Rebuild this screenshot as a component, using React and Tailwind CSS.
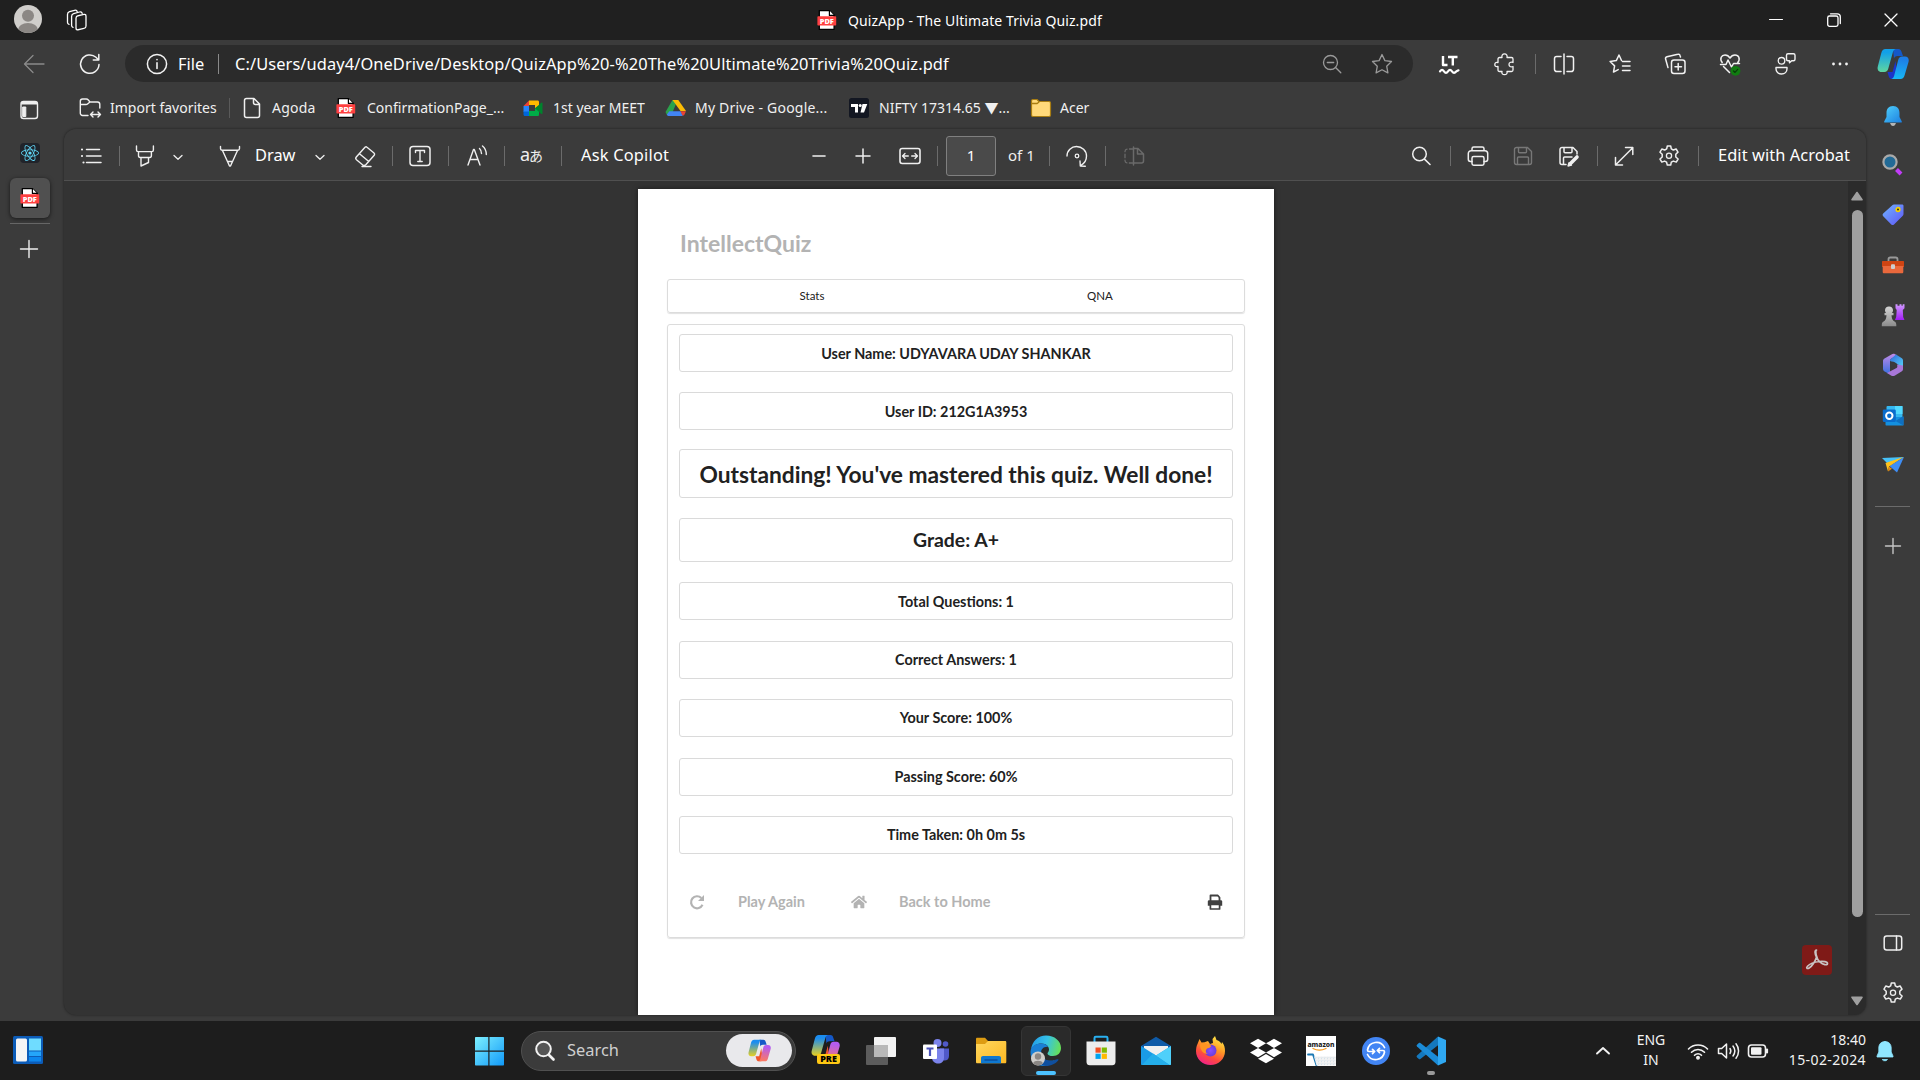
import React from "react";
import { FaDropbox, FaHome, FaReact } from "react-icons/fa";

function Icon({ size = "size-6", box = "0 0 24 24", className = "", children }) {
  return (
    <svg
      viewBox={box}
      fill="none"
      stroke="currentColor"
      strokeWidth="1.3"
      strokeLinecap="round"
      strokeLinejoin="round"
      className={`shrink-0 ${size} ${className}`}
    >
      {children}
    </svg>
  );
}

function T({ className = "", children }) {
  return <span className={`shrink-0 whitespace-nowrap ${className}`}>{children}</span>;
}

function Divider({ className = "", tone = "bg-[#6b6b6b]" }) {
  return <div className={`h-5 w-px shrink-0 ${tone} ${className}`} />;
}

function PdfIcon({ className = "" }) {
  return (
    <Icon className={className}>
      <path d="M4.3 2.6h10.2l4.6 4.6v14.2H4.3z" fill="#fff" stroke="#000" strokeWidth="1.3" />
      <path d="M14.4 2.6v4.8h4.8" fill="#fff" stroke="#000" strokeWidth="1.2" />
      <rect x="2.4" y="8.2" width="18.8" height="9.4" rx="0.8" fill="#ff4040" stroke="none" />
      <text x="11.8" y="15.6" textAnchor="middle" fontSize="7.4" fontWeight="900" fill="#fff" stroke="none" fontFamily="Noto Sans, sans-serif">PDF</text>
    </Icon>
  );
}

function GearIcon({ className = "" }) {
  return (
    <Icon className={className}>
      <path d="M10.3 2h3.4l.6 2.9 2 1.1 2.8-1 1.9 3.1-2.2 2.1v2.8l2.3 2-1.8 3.1-2.9-1-2.1 1.1-.6 2.9h-3.4l-.7-2.9-2-1.1-2.8 1L3 15l2.2-2v-2.7L3 8.2 4.8 5l2.9 1 2-1.1z" strokeWidth="1.5" />
      <circle cx="12" cy="11.7" r="2.6" />
    </Icon>
  );
}

function ChevronDown({ className = "" }) {
  return (
    <Icon size="size-3" box="0 0 12 12" className={className}>
      <path d="M2 4.5 6 8.3l4-3.8" />
    </Icon>
  );
}

function Copilot({ size = "size-8", id, stops }) {
  const [a, b, c, d, e] = stops;
  return (
    <Icon size={size} box="0 0 32 32">
      <defs>
        <linearGradient id={`${id}l`} x1="0" y1="0" x2="0" y2="1">
          <stop offset="0.15" stopColor={a} />
          <stop offset="1" stopColor={b} />
        </linearGradient>
        <linearGradient id={`${id}r`} x1="0.4" y1="0" x2="0.3" y2="1">
          <stop offset="0.1" stopColor={c} />
          <stop offset="1" stopColor={d} />
        </linearGradient>
      </defs>
      <path d="M16 1h5.4c1.7 0 2.5 1 3 2.5L26 8h-5.5c-2 0-3 1-3.5 2.5z" fill="#1458c8" stroke="none" />
      <path d="M10.5 24h5l3-11 1.5 12-1.5 6h-3.7c-1.6 0-2.5-1-3-2.5z" fill={e} stroke="none" />
      <path d="M8.5 1h10.2c-1.7.4-2.4 1.7-2.9 3.5l-4.5 16c-.6 2.2-1.6 3.5-4 3.5H4.5C1.5 24 0 21.5.8 18.5L4.3 5C5 2.4 6.3 1 8.5 1z" fill={`url(#${id}l)`} stroke="none" />
      <path d="M23.5 31H14.3c1.7-.4 2.4-1.7 2.9-3.5l4-15.5c.6-2.2 1.6-3.5 4-3.5h2.8c3 0 4.3 2.5 3.5 5.5L27.7 27c-.7 2.6-2 4-4.2 4z" fill={`url(#${id}r)`} stroke="none" />
    </Icon>
  );
}

function TitleBar() {
  return (
    <div className="flex h-10 items-center bg-[#202020] text-white">
      <Icon size="size-7" box="0 0 28 28" className="ml-3.5 mb-0.5">
        <defs>
          <clipPath id="face"><circle cx="14" cy="14" r="14" /></clipPath>
        </defs>
        <g clipPath="url(#face)" stroke="none">
          <rect width="28" height="28" fill="#d0cecb" />
          <circle cx="14" cy="10.8" r="6" fill="#8b8784" />
          <ellipse cx="14" cy="25" rx="10" ry="7" fill="#8b8784" />
        </g>
      </Icon>
      <Icon className="ml-[23px]">
        <rect x="11" y="7" width="10" height="14" rx="2" transform="skewY(-12) translate(0 3.5)" />
        <path d="M8 19.3c-1-.2-1.4-.8-1.4-1.700V8.500c0-1.500.6-2.400 2-2.800L14.500 4c1.400-.4 2.400.1 2.700 1.300" />
        <path d="M4 16.300c-1-.2-1.500-.8-1.500-1.700V6.500c0-1.500.6-2.400 2-2.800L9.500 2.300c1.400-.4 2.400.1 2.700 1.300" />
      </Icon>
      <PdfIcon className="ml-[726px]" />
      <T className="ml-[9px] w-[254px] text-[14px] tracking-[0.1px]">QuizApp - The Ultimate Trivia Quiz.pdf</T>
      <Icon size="size-3.5" box="0 0 14 14" className="ml-[667px]"><path d="M0.5 6.500h13" strokeWidth="1" /></Icon>
      <Icon size="size-3.5" box="0 0 14 14" className="ml-[44px]">
        <rect x="0.7" y="3" width="10.3" height="10.3" rx="1.8" />
        <path d="M3.500.8h6.800c1.900 0 3 1.100 3 3v6.700" />
      </Icon>
      <Icon size="size-3.5" box="0 0 14 14" className="ml-[43px]"><path d="M1 1l12 12M13 1 1 13" /></Icon>
    </div>
  );
}

function AddressRow() {
  return (
    <div className="flex h-[47px] items-center text-[#f2f2f2]">
      <Icon className="ml-[22px] text-[#8a8a8a]"><path d="M22 12H3M11 3.500 2.500 12l8.500 8.500" /></Icon>
      <Icon className="ml-8"><path d="M21 12.500A9.200 9.200 0 1 1 18 5.300l2.700 2.700M20.800 2.500V8h-5.500" strokeWidth="1.5" /></Icon>
      <div className="ml-[23px] flex h-[37px] w-[1288px] shrink-0 items-center rounded-full bg-[#2b2b2b] pr-[19px]">
        <Icon className="ml-5">
          <circle cx="12" cy="12" r="9.6" strokeWidth="1.5" />
          <path d="M12 10.800v5.700M12 7.500v.2" strokeWidth="1.6" />
        </Icon>
        <T className="ml-[9px] w-[26px] pt-px text-[16.4px] text-white">File</T>
        <Divider className="ml-3.5" tone="bg-[#8a8a8a]" />
        <T className="ml-4 w-[714px] pt-px text-[16.4px] tracking-[0.1px] text-white">C:/Users/uday4/OneDrive/Desktop/QuizApp%20-%20The%20Ultimate%20Trivia%20Quiz.pdf</T>
        <Icon className="ml-auto text-[#9a9a9a]"><circle cx="10.5" cy="10.5" r="7" /><path d="m15.800 15.800 5 5M7.300 10.500h6.400" /></Icon>
        <Icon className="ml-[26px] text-[#9a9a9a]"><path d="m12 2.500 2.900 6.100 6.600.9-4.800 4.700 1.200 6.700L12 17.700l-5.900 3.200 1.200-6.700L2.500 9.500l6.600-.9z" /></Icon>
      </div>
      <Icon className="ml-6 text-white">
        <path d="M6 4v9h4.500M11 5h9.500M15.800 5v8.500" strokeWidth="2.4" strokeLinecap="butt" />
        <path d="M3 19.300c1.500-2 2.600-2 4 0s2.600 2 4 0 2.600-2 4 0 2.600 2 4.500 0l2-1" strokeWidth="2.2" />
      </Icon>
      <Icon className="ml-8"><path d="M6.500 5.500H9c-.6-2.400.7-3.600 2.500-3.600S14.600 3.100 14 5.500h4.500c1 0 1.500.5 1.500 1.500v3.500c-2.600-.8-4 .2-4 2s1.400 2.800 4 2V18c0 1-.5 1.500-1.500 1.500H14c.6 2.200-.7 3.200-2.500 3.200S8.400 21.700 9 19.500H6.500c-1 0-1.500-.5-1.500-1.500v-3.500c-2.200.6-3.200-.4-3.200-2s1-2.600 3.200-2V7c0-1 .5-1.500 1.500-1.500z" /></Icon>
      <Divider className="ml-[18px]" />
      <Icon className="ml-4"><path d="M12 2v20M9 4.500H4.700A2.200 2.200 0 0 0 2.500 6.700v10.600a2.200 2.200 0 0 0 2.200 2.200H9M15 4.500h4.300a2.200 2.200 0 0 1 2.200 2.200v10.600a2.200 2.200 0 0 1-2.200 2.200H15" strokeWidth="1.5" /></Icon>
      <Icon className="ml-8"><path d="M13.500 8.500 11 3 8.300 8.600l-6.200.9 4.500 4.400-1.100 6.200 4.700-2.500M14.500 9.500H22M14.500 14H22M14.500 18.500H22" strokeWidth="1.5" /></Icon>
      <Icon className="ml-[31px]">
        <rect x="8.5" y="8" width="13.5" height="13.5" rx="2.5" strokeWidth="1.5" />
        <path d="M15.200 11.500v6.500M12 14.800h6.500M17.500 5l-.4-1.300c-.3-1.100-1.200-1.700-2.300-1.400L4 4.700c-1.100.3-1.700 1.200-1.400 2.300L5 15.600" strokeWidth="1.5" />
      </Icon>
      <Icon className="ml-[31px]">
        <path d="M4.200 10.500C1.300 6.500 3.500 3 7 3c2.300 0 3.900 1.200 5 3 1.100-1.800 2.700-3 5-3 3.600 0 5.700 3.500 2.800 7.500M5.500 14.500l6 6M2.500 12.500H8l2-4.500 3.500 7 2-3.500h6" strokeWidth="1.5" />
        <circle cx="17.500" cy="18.800" r="4.9" fill="#107c10" stroke="none" />
        <path d="m15.500 19 1.500 1.400 2.700-3" stroke="#0a3d0a" />
      </Icon>
      <Icon className="ml-[31px]">
        <circle cx="8.5" cy="8.8" r="3.3" />
        <path d="M3 15.500h11v1.300c0 3-2.200 5.200-5.500 5.200S3 19.800 3 16.800zM15 1.800h5.500c1 0 1.500.6 1.500 1.500v4c0 1-.5 1.500-1.500 1.500h-1.800l-2.200 2V8.800H15c-1 0-1.500-.5-1.500-1.500v-4c0-.9.5-1.500 1.500-1.500z" strokeWidth="1.4" />
      </Icon>
      <Icon className="ml-[31px]"><path d="M5.500 12h.01M12 12h.01M18.500 12h.01" strokeWidth="2.8" /></Icon>
      <div className="ml-[25px]">
        <Copilot id="cpa" stops={["#12a0e8", "#5fd6a0", "#1d7fe8", "#18b9f5", "#1b35c9"]} />
      </div>
    </div>
  );
}

function Favorites() {
  return (
    <div className="flex h-[42px] items-center text-[14px] text-[#f0f0f0]">
      <Icon className="ml-3.5"><path d="M10 19.500H4.500a2.200 2.200 0 0 1-2.200-2.200V5.200C2.300 4 3.300 3 4.500 3h3.800c.8 0 1.500.4 2 1l1.700 2h7.500c1.300 0 2.300 1 2.300 2.200V12M2.500 8.500H8c.7 0 1.300-.3 1.800-.8L12 6M12.500 18.500h10M15 16l-2.500 2.500L15 21M20 16l2.500 2.500L20 21" strokeWidth="1.4" /></Icon>
      <T className="ml-2 w-[107px] pb-0.5">Import favorites</T>
      <Divider className="ml-3" tone="bg-[#5a5a5a]" />
      <Icon className="ml-2.5"><path d="M6.500 2.500H14l5.500 5.500v11.500a2 2 0 0 1-2 2h-11a2 2 0 0 1-2-2v-15a2 2 0 0 1 2-2zM13.500 3v3.500c0 1.100.9 2 2 2h3.700" strokeWidth="1.5" /></Icon>
      <T className="ml-2 w-[46px] pb-0.5 tracking-[0.2px]">Agoda</T>
      <PdfIcon className="ml-4" />
      <T className="ml-[9px] w-[137px] pb-0.5">ConfirmationPage_...</T>
      <Icon className="ml-[17px]">
        <g stroke="none">
          <path d="M8 4.500h8.500c1 0 1.500.6 1.500 1.500v4l-4 2.500v-3.500H8z" fill="#ffba00" />
          <path d="M2.500 10 8 4.500V10z" fill="#ea4335" />
          <path d="M2.500 10H8v6H2.500z" fill="#2684fc" />
          <path d="M2.500 15.500H8V20H4c-1 0-1.500-.6-1.500-1.500z" fill="#0066da" />
          <path d="M8 15h6v-3l4-1v7.500c0 1-.5 1.500-1.500 1.500H8z" fill="#00ac47" />
          <path d="m14 12.200 6.300-5.500c.5-.4 1.200-.1 1.200.6v10c0 .7-.7 1-1.200.6z" fill="#00832d" />
        </g>
      </Icon>
      <T className="ml-2 w-[93px] pb-0.5">1st year MEET</T>
      <Icon className="ml-[18px]">
        <g stroke="none">
          <path d="M8.500 4h5L7 20l-4-1-1.500-3z" fill="#2ba24c" />
          <path d="M8.500 4h5.800L22 15h-5.500z" fill="#fbbc04" />
          <path d="M22 15.300H16l2.500 4.400c1 0 1.500-.4 2-1.200z" fill="#ea4335" />
          <path d="M5.300 15.300h11L18.700 20H5c-1 0-1.600-.4-2.200-1.300z" fill="#4285f4" />
        </g>
      </Icon>
      <T className="ml-[7px] w-[134px] pb-0.5 tracking-[0.2px]">My Drive - Google...</T>
      <Icon className="ml-[18px]">
        <rect x="2" y="2" width="20" height="20" rx="2.5" fill="#131722" stroke="none" />
        <path d="M4 8h7v8.500H8V11H4zM15.500 8h4.800L17 16.500h-3.500z" fill="#fff" stroke="none" />
        <circle cx="13.2" cy="9.4" r="1.5" fill="#fff" stroke="none" />
      </Icon>
      <T className="ml-2 w-[132px] pb-0.5">NIFTY 17314.65 ▼...</T>
      <Icon className="ml-[18px]">
        <path d="M2.500 5c0-1 .5-1.500 1.500-1.500h4L10 5.500h10c1 0 1.500.5 1.500 1.500v12c0 1-.5 1.500-1.500 1.500H4c-1 0-1.500-.5-1.500-1.500z" fill="#ffd97a" stroke="#a87d12" strokeWidth="1.2" />
        <path d="M3.200 7.500h5L10 6" stroke="#a87d12" />
      </Icon>
      <T className="ml-[7px] w-[30px] pb-0.5">Acer</T>
    </div>
  );
}

function PdfToolbar() {
  return (
    <div className="flex h-[52px] shrink-0 items-center border-b border-[#505050] bg-[#3b3b3b] pt-0.5 text-[16.4px] text-[#efefef]">
      <Icon className="ml-[15px]"><path d="M7.500 5.500h13M7.500 12H22M7.500 18.500H22" strokeWidth="1.5" /><path d="M3 5.500h.01M3 12h.01M4.500 18.500h.01" strokeWidth="2.2" /></Icon>
      <Divider className="ml-4" />
      <Icon className="ml-[13px]"><path d="M3.500 2v4c0 1 .6 1.600 1.600 1.600h13.700c1 0 1.600-.6 1.600-1.600V2M5.500 7.600v4c0 1 .7 1.900 1.700 1.900h9.500c1 0 1.700-.9 1.700-1.900v-4M8 13.500V22l7.500-3.500v-5" strokeWidth="1.4" /></Icon>
      <ChevronDown className="ml-[15px] mt-0.5" />
      <Icon className="ml-[34px]"><path d="M2.500 2.500v2c0 1 .6 1.700 1.600 1.700h15.800c1 0 1.600-.7 1.600-1.700v-2M4.500 6.500l7 15.500h1l7-15.500M9.800 17.500h4.500" strokeWidth="1.4" /></Icon>
      <T className="ml-[13px] w-10 text-white">Draw</T>
      <ChevronDown className="ml-[19px] mt-0.5" />
      <Icon className="ml-[27px]"><path d="M14 3.200 21 9c.8.7.8 1.500.2 2.300L13 20.500c-1 1-2.300 1.200-3.500.2l-6-5c-1-.9-1-1.800-.2-2.700L12 3.300c.6-.6 1.400-.7 2-.1zM6.500 9.800l9 7.500M9 22.500h9" strokeWidth="1.4" /></Icon>
      <Divider className="ml-[15px]" />
      <Icon className="ml-[15px]"><rect x="2" y="2.5" width="20" height="19" rx="3" strokeWidth="1.5" /><path d="M7.500 8.500V6.500h9v2M12 6.500v11M9.800 17.500h4.400" strokeWidth="1.4" /></Icon>
      <Divider className="ml-4" />
      <Icon className="ml-4"><path d="m3 21 5.500-15.500h.8L15 21M5 15.500h8M14.500 4.500c1.400 1.300 2 3 2 5M17.500 2c2.500 2 3.800 4.800 3.800 8.500" strokeWidth="1.4" /></Icon>
      <Divider className="ml-[15px]" />
      <span className="ml-[15px] w-6 shrink-0 whitespace-nowrap pb-0.5 text-[18px] tracking-[-1px]">a<span className="text-[14px]">あ</span></span>
      <Divider className="ml-[17px]" />
      <T className="ml-[19px] w-[90px] tracking-[0.2px] text-white">Ask Copilot</T>
      <Icon className="ml-[136px]"><path d="M6 12h12" strokeWidth="1.6" /></Icon>
      <Icon className="ml-5"><path d="M5 12h14M12 5v14" strokeWidth="1.5" /></Icon>
      <Icon className="ml-[23px]"><rect x="2" y="4.5" width="20" height="15" rx="2.2" strokeWidth="1.6" /><path d="M4.800 12h5.500M7 9.500 4.500 12 7 14.500M19.200 12h-5.500M17 9.500l2.500 2.500-2.500 2.500" /></Icon>
      <Divider className="ml-[15px]" />
      <div className="ml-2 flex h-10 w-[50px] shrink-0 items-center justify-center rounded-[3px] border border-[#808080] bg-[#4a4a4a] text-[15px] text-white">1</div>
      <T className="ml-3 w-[26px] text-[15px]">of 1</T>
      <Divider className="ml-[15px]" />
      <Icon className="ml-[15px]"><path d="M2 12C2 6.500 6.500 2.500 11.500 2.500c5.500 0 10 4.300 10 9.500 0 4-2 7.300-5.500 9.300M15 17l.3 5 5 .2" strokeWidth="1.4" /><circle cx="12" cy="12" r="1.8" /></Icon>
      <Divider className="ml-4" />
      <Icon className="ml-4 text-[#6a6a6a]"><path d="M11 5H5.500A2.500 2.500 0 0 0 3 7.500v9A2.500 2.500 0 0 0 5.500 19H11" strokeDasharray="3.5 2.5" /><path d="M11.500 3v18M11.500 4.500H16l5.500 5.500v7a2 2 0 0 1-2 2h-8M15.500 5v5h6" strokeWidth="1.5" /></Icon>
      <Icon className="ml-[263px]"><circle cx="10.5" cy="10" r="6.8" strokeWidth="1.5" /><path d="m15.500 15.200 5.500 5.300" strokeWidth="1.6" /></Icon>
      <Divider className="ml-[17px]" />
      <Icon className="ml-[15px]"><path d="M6 6.500V4.700C6 3.800 6.800 3 7.700 3h8.600c.9 0 1.700.8 1.700 1.700v1.800M6 17.500H4.500A2.200 2.200 0 0 1 2.300 15.300V9.500c0-1.600 1.200-2.800 2.800-2.800h13.800c1.600 0 2.800 1.200 2.800 2.800v5.800a2.200 2.200 0 0 1-2.200 2.200H18" strokeWidth="1.5" /><rect x="6" y="12.5" width="12" height="8.8" rx="1.7" strokeWidth="1.5" /></Icon>
      <Icon className="ml-[21px] text-[#777]"><path d="M5.500 3.500h11l4 4v11a2 2 0 0 1-2 2h-13a2 2 0 0 1-2-2v-13a2 2 0 0 1 2-2zM7.500 3.500v4.300c0 .6.4 1 1 1h6c.6 0 1-.4 1-1V3.500M6.500 20.500V14c0-.7.4-1 1-1h9c.6 0 1 .3 1 1v6.500" strokeWidth="1.4" /></Icon>
      <Icon className="ml-[22px]"><path d="M9 20.500H5a2 2 0 0 1-2-2v-13a2 2 0 0 1 2-2h11l4 4V10M7 3.500v4.300c0 .6.4 1 1 1h6c.6 0 1-.4 1-1V3.500M6.500 20.500V14c0-.7.4-1 1-1H15" strokeWidth="1.5" /><path d="m13.500 19.500 6.500-6.500" strokeWidth="3.6" /><path d="m11 22 3.500-.8-2.500-2.500z" fill="currentColor" /></Icon>
      <Divider className="ml-4" />
      <Icon className="ml-3.5"><path d="M4 20.500 20.500 4M13.500 3.500h7.300v7M3.500 13.500V21h7" strokeWidth="1.5" /></Icon>
      <GearIcon className="ml-[21px]" />
      <Divider className="ml-[17px]" />
      <T className="ml-[19px] w-[133px] tracking-[0.07px] text-white">Edit with Acrobat</T>
    </div>
  );
}

const ROWS = [
  ["mt-[9px] h-[38px] pt-px text-[14.4px]", "User Name: UDYAVARA UDAY SHANKAR"],
  ["mt-5 h-[38px] pt-px text-[14.4px]", "User ID: 212G1A3953"],
  ["mt-[19px] h-[49px] pt-[3px] text-[22.75px]", "Outstanding! You've mastered this quiz. Well done!"],
  ["mt-5 h-[44px] text-[19.4px]", "Grade: A+"],
  ["mt-5 h-[38px] pt-px text-[14.4px]", "Total Questions: 1"],
  ["mt-[21px] h-[38px] text-[14.4px]", "Correct Answers: 1"],
  ["mt-5 h-[38px] text-[14.4px]", "Your Score: 100%"],
  ["mt-[21px] h-[38px] text-[14.4px]", "Passing Score: 60%"],
  ["mt-5 h-[38px] text-[14.4px]", "Time Taken: 0h 0m 5s"],
];

function Page() {
  return (
    <div className="ml-[574px] mt-2 flex h-[826px] w-[636px] shrink-0 flex-col bg-white px-[29px] text-[#212121] shadow-[0_0_5px_rgba(0,0,0,0.5)] [font-family:Lato,sans-serif]">
      <div className="mt-[38px] flex h-8 items-center pl-[13px] text-[23px] font-bold text-[#b3b3b3]"><T>IntellectQuiz</T></div>
      <div className="mt-5 flex h-[34px] shrink-0 items-center rounded-[3px] border border-[#dcdcdc] text-[11.5px] shadow-[0_1px_1px_#e2e2e2]">
        <div className="flex-1 text-center"><T>Stats</T></div>
        <div className="flex-1 text-center"><T>QNA</T></div>
      </div>
      <div className="mt-[11px] flex h-[614px] shrink-0 flex-col rounded-[3px] border border-[#dcdcdc] px-[11px] shadow-[0_1px_1px_#e2e2e2]">
        {ROWS.map(([cls, text]) => (
          <div key={text} className={`flex shrink-0 items-center justify-center rounded-[3px] border border-[#dadada] font-bold ${cls}`}><T>{text}</T></div>
        ))}
        <div className="mt-9 flex h-6 items-center text-[14.5px] font-bold text-[#b3b3b3]">
          <Icon size="size-4" box="0 0 16 16" className="mb-px ml-2.5"><path d="M13.500 10.800A6 6 0 1 1 12.300 4" strokeWidth="2.2" strokeLinecap="butt" /><path d="M15 1v6H9z" fill="currentColor" stroke="none" /></Icon>
          <T className="ml-[33px] w-[68px]">Play Again</T>
          <FaHome className="mb-px ml-[45px] size-4" />
          <T className="ml-8 w-[90px]">Back to Home</T>
          <Icon size="size-4" box="0 0 16 16" className="mb-px ml-auto mr-[10px] text-[#404040]">
            <path d="M3.500 7V1.500h7.300L12.500 3.500V7" strokeWidth="1.8" />
            <path d="M.8 7.500C.8 6.700 1.500 6.200 2.300 6.200h11.400c.8 0 1.500.5 1.500 1.300v4.300H.8z" fill="currentColor" stroke="none" />
            <rect x="3.4" y="10.3" width="9.2" height="4.7" fill="#fff" strokeWidth="1.7" />
          </Icon>
        </div>
      </div>
    </div>
  );
}

function Viewer() {
  return (
    <div className="flex h-[886px] flex-col overflow-hidden rounded-xl bg-[#333] shadow-[0_0_3px_rgba(0,0,0,0.45)]">
      <PdfToolbar />
      <div className="flex min-h-0 flex-1">
        <Page />
        <div className="ml-auto mr-4 flex flex-col justify-end pb-10">
          <div className="flex size-[30px] items-center justify-center rounded-[4px] bg-[#7f1a17]">
            <Icon className="text-[#c9c4c4]">
              <path d="M11.500 2c-2 0-1.800 3.500 0 7.200-1.500 4.300-4 8.500-7 10.500-2.500 1.700-3.600.3-2-1.500 2.500-2.700 7.500-4.200 12-4.700 4-.4 8 .2 8 2.200s-4.500 1-7.500-1.500c-4-3.300-5-12.200-3.500-12.200z" strokeWidth="1.7" />
            </Icon>
          </div>
        </div>
        <div className="flex w-[18px] flex-col items-center bg-[#2b2b2b] pt-2.5 text-[#9f9f9f]">
          <Icon size="h-2.5 w-3" box="0 0 12 10"><path d="M6 1.500 11 8.800H1z" fill="currentColor" strokeWidth="1.6" /></Icon>
          <div className="mt-[9px] h-[707px] w-[11px] rounded-full bg-[#9f9f9f]" />
          <Icon size="h-2.5 w-3" box="0 0 12 10" className="mb-[9px] mt-auto"><path d="M6 8.500 1 1.200h10z" fill="currentColor" strokeWidth="1.6" /></Icon>
        </div>
      </div>
    </div>
  );
}

function LeftRail() {
  return (
    <div className="flex w-16 shrink-0 flex-col items-start pl-[17px] text-[#eee]">
      <Icon className="mt-[11px]"><rect x="4" y="3.5" width="16.5" height="17" rx="2.5" strokeWidth="1.4" /><path d="M4 6.500V6c0-1.500 1-2.500 2.500-2.500h11.600c1.400 0 2.400 1 2.400 2.500v.5z" fill="currentColor" stroke="none" /><path d="M6 9h2.800v9.500H6z" fill="currentColor" strokeWidth="1" /></Icon>
      <div className="ml-[3px] mt-[21px] flex size-5 items-center justify-center rounded-sm bg-[#20232a]"><FaReact className="size-[18px] text-[#61dafb]" /></div>
      <div className="-ml-[7px] mt-[15px] flex size-10 items-center justify-center rounded-md bg-[#505050] shadow-[0_1px_4px_rgba(0,0,0,0.6)]"><PdfIcon /></div>
      <div className="-ml-[7px] mt-[5px] h-px w-10 bg-[#666]" />
      <Icon className="mt-[13px]"><path d="M3.500 12h17M12 3.500v17" strokeWidth="1.4" /></Icon>
    </div>
  );
}

function RightRail() {
  return (
    <div className="flex w-[54px] shrink-0 flex-col items-center pb-4 pr-px text-[#eee]">
      <svg className="size-0">
        <defs>
          <linearGradient id="bell" x1="0" y1="0" x2="1" y2="1"><stop stopColor="#4fd0fb" /><stop offset="1" stopColor="#1c7fe0" /></linearGradient>
          <linearGradient id="tag" x1="0" y1="0" x2="1" y2="1"><stop stopColor="#6fb4ff" /><stop offset="1" stopColor="#6055f5" /></linearGradient>
          <linearGradient id="rook" x1="0" y1="0" x2="0" y2="1"><stop stopColor="#d09aff" /><stop offset="1" stopColor="#a11df5" /></linearGradient>
          <linearGradient id="pawn" x1="0" y1="0" x2="0" y2="1"><stop stopColor="#d5d5d5" /><stop offset="1" stopColor="#8b8b8b" /></linearGradient>
          <linearGradient id="m1" x1="0" y1="0" x2="0" y2="1"><stop stopColor="#c08be8" /><stop offset="1" stopColor="#3b6fe0" /></linearGradient>
          <linearGradient id="m2" x1="0" y1="0" x2="1" y2="1"><stop stopColor="#2c66d8" /><stop offset="1" stopColor="#57d5f8" /></linearGradient>
        </defs>
      </svg>
      <Icon className="mt-[17px]"><g stroke="none"><path d="M9 19h6l-1 2c-1 1.200-3 1.200-4 0z" fill="#b5b5b5" /><path d="M12 2C7.500 2 5.500 5 5.500 9v4L3.200 17.500c-.2.6 0 1 .6 1h16.400c.6 0 .8-.4.6-1L18.500 13V9c0-4-2-7-6.500-7z" fill="url(#bell)" /></g></Icon>
      <Icon className="mt-[25px]"><path d="m15.500 16.500 4.500 4.500" stroke="#c13cf7" strokeWidth="4" strokeLinecap="butt" /><circle cx="9" cy="9" r="6.6" fill="#226a96" stroke="#a9a9a9" strokeWidth="2.2" /></Icon>
      <Icon className="mt-[26px]"><path d="M13 1.500h8c1 0 1.500.5 1.500 1.500v8c0 .7-.3 1.200-.7 1.700L13 21.400c-.9.8-1.900.8-2.700 0L2.200 13.200c-.8-.9-.8-1.900 0-2.700L11.300 2.200c.5-.5 1-.7 1.700-.7z" fill="url(#tag)" stroke="none" /><circle cx="17" cy="6.5" r="1.8" stroke="#f5d000" strokeWidth="1.7" fill="#222" /></Icon>
      <Icon className="mt-[27px]"><path d="M7.500 7V5.300c0-1 .7-1.800 1.800-1.800h5.400c1.100 0 1.800.8 1.800 1.800V7" stroke="#999" strokeWidth="1.8" /><path d="M1 8c0-.7.4-1 1-1h20c.6 0 1 .3 1 1v5H1z" fill="#cf4413" stroke="none" /><path d="M1.700 12h20.600v6c0 .8-.5 1.300-1.300 1.300H3c-.8 0-1.300-.5-1.300-1.300z" fill="#e9683c" stroke="none" /><rect x="10" y="10.3" width="4" height="4.7" rx="1" fill="#cfcfcf" stroke="none" /></Icon>
      <Icon className="mt-[25px]"><path d="M14.500 1.300h2v1.500h2V1.300h2v1.500h1.200V1.300H23.500v4L21.800 7l.4 7 1.300 3H14l1.200-3 .5-7-1.200-1.700z" fill="url(#rook)" stroke="none" /><path d="M8 3.500c2.500 0 4 1.700 4 3.800 0 1.200-.4 2-1.200 2.700h1.700v2.300h-2c.2 3 .8 5 3 6.300 1.200.7 1.800 1.700 1.800 3.400v1.300H.8V22c0-1.700.6-2.700 1.800-3.400 2.200-1.300 2.700-3.300 2.900-6.300H3.500V10h1.700C4.400 9.300 4 8.500 4 7.300 4 5.200 5.500 3.500 8 3.500z" fill="url(#pawn)" stroke="none" /></Icon>
      <Icon className="mt-[26px]"><g stroke="none"><path d="M10.500 1.500 3.500 5.500C2.400 6.200 2 7 2 8v8c0 1 .4 1.700 1.200 2.200l4 2.200c1 .6 1.800 0 1.800-1V8c0-1 .4-1.700 1.200-2.200l6-3.500-2.200-1.100c-1-.5-2.300-.5-3.500.3z" fill="url(#m1)" /><path d="M15 1.500 20.500 5c1.100.7 1.500 1.500 1.500 2.500v6.300c0 .6-.5.8-1 .4L14 9.600 9 8c0-1 .4-1.700 1.200-2.200z" fill="url(#m2)" /><path d="M22 12.500V16c0 1-.4 1.900-1.500 2.500l-6.500 4c-1.300.8-2.700.8-4 0L6 20l9.500-5c1-.6 1-1.500.5-3.500z" fill="#a877d8" /><path d="m12 8.500 3.300 2v3.500L12 16l-2.700-2v-3.700z" fill="#3b3b3b" /></g></Icon>
      <Icon className="mt-[27px]"><g stroke="none"><rect x="5.5" y="2" width="16" height="14" rx="1" fill="#35b8f1" /><path d="M14 2h7.500v8H14z" fill="#50d9ff" /><path d="M4.500 13h18v7.500c0 .7-.3 1-1 1h-16c-.7 0-1-.3-1-1z" fill="#1490df" /><path d="m22.500 12-8 5 8 4.500z" fill="#0f6fc0" /><rect x="1.8" y="5.5" width="13" height="12.5" rx="1.3" fill="#0a6ccc" /></g><circle cx="8.3" cy="11.7" r="3.2" stroke="#fff" strokeWidth="2" /></Icon>
      <Icon className="mt-[25px]"><g stroke="none"><path d="M1 5 23 4 8.500 12.500z" fill="#47c2f8" /><path d="M23 4 16 19.500 8.500 13z" fill="#3f8ef5" /><path d="m4.500 10 18-6L8 13.500 7 18.500z" fill="#ffc21c" /><path d="m7 18.500 1-5 3 2.300z" fill="#e88b10" /></g></Icon>
      <div className="mt-[29px] h-px w-[35px] bg-[#6b6b6b]" />
      <Icon className="mt-[27px] text-[#c5c5c5]"><path d="M4.500 12h15M12 4.500v15" strokeWidth="1.4" /></Icon>
      <div className="mb-[16px] mt-auto h-px w-[35px] bg-[#6b6b6b]" />
      <Icon><rect x="3.2" y="5" width="17.5" height="14" rx="2.5" strokeWidth="1.5" /><path d="M15.500 5v14" strokeWidth="1.5" /></Icon>
      <GearIcon className="mt-[26px]" />
    </div>
  );
}

function Cell({ children }) {
  return <div className="flex w-[55px] shrink-0 items-center justify-center">{children}</div>;
}

const RAINBOW = ["#1b8df0", "#e8d020", "#b45cf0", "#ff7a5c", "#f0562c"];

function Taskbar() {
  return (
    <div className="flex h-[59px] items-center bg-[#1d1d1d] text-[#f2f2f2]">
      <Icon size="size-[30px]" box="0 0 30 30" className="ml-[13px] mb-0.5"><g stroke="none"><rect y="1" width="30" height="28" rx="1.5" fill="#0c5cb8" /><rect x="3" y="3.5" width="11" height="23" rx="1.5" fill="#f5f5f5" /><path d="M16 3.500h12v12H16z" fill="#6fdcff" /><path d="M16 16.500h12v4.500H16z" fill="#24a5fa" /><path d="M16 22h12v4.500H16z" fill="#0c86ee" /></g></Icon>
      <Icon size="size-[30px]" box="0 0 30 30" className="ml-[431px]">
        <defs><linearGradient id="win" x1="0" y1="0" x2="1" y2="1"><stop stopColor="#7df0ff" /><stop offset="1" stopColor="#1199f8" /></linearGradient></defs>
        <path d="M1 2c0-.6.4-1 1-1h12.300v13.500H1zM15.500 1H29c.6 0 1 .4 1 1v12.500H15.500zM1 15.800h13.300v13.700H2c-.6 0-1-.4-1-1zM15.500 15.800H30v12.700c0 .6-.4 1-1 1H15.500z" fill="url(#win)" stroke="none" />
      </Icon>
      <div className="ml-[17px] flex h-10 w-[275px] shrink-0 items-center rounded-full border border-[#505050] bg-[#3b3b3b] pr-[3px]">
        <Icon className="ml-[11px]"><circle cx="10.5" cy="10" r="7.3" strokeWidth="2" fill="#555" /><path d="m16 16 4.500 4.500" strokeWidth="2.6" /></Icon>
        <T className="ml-2.5 w-[51px] text-[16.4px] text-[#cfcfcf]">Search</T>
        <div className="ml-auto flex h-[33px] w-[66px] items-center justify-center rounded-full bg-[#e9e9ec]"><Copilot size="h-[23px] w-[25px]" id="cpb" stops={RAINBOW} /></div>
      </div>
      <div className="ml-[2px] flex h-full">
        <Cell>
          <div className="relative mb-1">
            <Copilot size="size-[29px]" id="cpc" stops={RAINBOW} />
            <div className="absolute -bottom-px left-1.5 h-[10px] w-[23px] rounded-[2px] bg-[#ffc814] text-center text-[9px] font-black leading-[10px] text-black">PRE</div>
          </div>
        </Cell>
        <Cell>
          <Icon size="size-[30px]" box="0 0 30 30"><g stroke="none"><rect x="8" y="1" width="22" height="20" rx="1" fill="#f3f3f3" /><rect y="9" width="22" height="20" rx="1" fill="#5c5c5c" /><path d="M8 9h14v12H8z" fill="#b9b9b9" /></g></Icon>
        </Cell>
        <Cell>
          <Icon size="size-7" box="0 0 28 28"><g stroke="none"><circle cx="15.5" cy="6" r="4" fill="#7b83eb" /><circle cx="23.5" cy="7" r="2.8" fill="#5059c9" /><path d="M18 11.500h9v7.500c0 3-2 4.500-4.500 4.500s-4.500-1.500-4.500-4z" fill="#5059c9" /><path d="M10 11.500h12v9c0 4-2.500 6-6 6s-6-2.500-6-6z" fill="#7b83eb" /><rect x="1" y="7.5" width="14" height="14.5" rx="1" fill="#fff" /></g><path d="M4.500 11.500h7M8 11.500V19" stroke="#4b53bc" strokeWidth="2.2" strokeLinecap="butt" /></Icon>
        </Cell>
        <Cell>
          <Icon size="size-8" box="0 0 32 32"><defs><linearGradient id="fold" x1="0" y1="0" x2="1" y2="1"><stop stopColor="#ffd75e" /><stop offset="1" stopColor="#fcb823" /></linearGradient></defs><g stroke="none"><path d="M1 4c0-.8.5-1.300 1.300-1.300H10l3 3.300h5v5H1z" fill="#dd9c12" /><path d="M1 9h9l3-3h17c.8 0 1.300.5 1.300 1.300V27c0 .8-.5 1.300-1.300 1.300H2.300C1.500 28.300 1 27.800 1 27z" fill="url(#fold)" /><path d="M6 28.300V23c0-1.300.8-2 2-2h16c1.200 0 2 .7 2 2v5.300z" fill="#0f78d0" /></g><path d="M10 25h12" stroke="#0b4f9e" strokeWidth="1.5" /></Icon>
        </Cell>
        <div className="relative flex w-[55px] shrink-0 items-center justify-center">
          <div className="flex size-[50px] items-center justify-center rounded-md border border-[#353535] bg-[#2a2a2a]">
            <Icon size="size-[31px]" box="0 0 31 31">
              <defs>
                <linearGradient id="eg1" x1="0" y1="0.3" x2="1" y2="0.5"><stop stopColor="#229be6" /><stop offset="0.5" stopColor="#35c1e8" /><stop offset="1" stopColor="#66e05a" /></linearGradient>
              </defs>
              <g stroke="none">
                <path d="M1 15C2 6 8 .5 16 .5c8.500 0 15 5.500 15 12.500 0 5-3.500 8-8 8-3.500 0-5.500-1.200-5.500-2.600 0-1 1.500-1.600 1.500-3.900 0-3.200-3-6-7.500-6C6.500 8.500 2.500 11 1 15z" fill="url(#eg1)" />
                <path d="M.5 16.500C1 11 5.500 8.500 11.500 8.500c3 0 5.500 1.500 6.700 3.300-5-.5-7.200 2.700-7.200 6 0 6.500 7 9.700 14 7.200-3 4-7 6-11 6C6 31 0 25 .5 16.500z" fill="#1a7fd4" />
                <path d="M11.500 16c-1.500 7 5 11.500 13 9.200 1.700-.6 3.300-1.400 4-.6.5.7-4 6.400-12.500 6.400-7 0-9-9.500-4.500-15z" fill="#0f4f9e" />
                <circle cx="8" cy="23.5" r="7" fill="#cfcdca" />
                <circle cx="8" cy="21.5" r="3.2" fill="#8b8784" />
                <path d="M3 28.300c1-3.300 9-3.300 10 0-2.500 2.800-7.500 2.800-10 0z" fill="#8b8784" />
              </g>
            </Icon>
          </div>
          <div className="absolute bottom-[5px] h-1 w-5 rounded-full bg-[#4cc2ff]" />
        </div>
        <Cell>
          <Icon size="size-8" box="0 0 32 32"><path d="M9.500 7V3c0-.8.5-1.300 1.300-1.300h10.400c.8 0 1.300.5 1.300 1.300v4" stroke="#29b0f0" strokeWidth="2" /><path d="M1.500 6.500h29V27c0 2-1.300 3.300-3.300 3.300H4.800c-2 0-3.300-1.300-3.300-3.300z" fill="#ededed" stroke="none" /><g stroke="none"><path d="M10.500 12.500h5.200v5.200h-5.200z" fill="#f25022" /><path d="M16.700 12.500h5.200v5.200h-5.200z" fill="#7fba00" /><path d="M10.500 18.700h5.200v5.200h-5.200z" fill="#00a4ef" /><path d="M16.700 18.700h5.200v5.200h-5.200z" fill="#ffb900" /></g></Icon>
        </Cell>
        <Cell>
          <Icon size="size-8" box="0 0 32 32"><g stroke="none"><path d="M1 11 16 1.800 31 11v3H1z" fill="#0f5ba8" /><path d="M4 11h24v10H4z" fill="#f0f0f0" /><path d="M1 11l15 9.500L31 11v18c0 .6-.4 1-1 1H2c-.6 0-1-.4-1-1z" fill="#1a9be6" /><path d="M31 11v18c0 .6-.4 1-1 1h-.5L13 18.700l3 1.800z" fill="#4fd0fa" /><path d="m13 18.500 16.500 11.500H2z" fill="#24aeea" /></g></Icon>
        </Cell>
        <Cell>
          <Icon size="size-[31px]" box="0 0 31 31">
            <defs>
              <linearGradient id="ffx" x1="0.8" y1="0" x2="0.3" y2="1"><stop stopColor="#fff14a" /><stop offset="0.4" stopColor="#ff9a25" /><stop offset="0.7" stopColor="#ff4b3e" /><stop offset="1" stopColor="#f0208c" /></linearGradient>
              <radialGradient id="ffg"><stop stopColor="#8a4dff" /><stop offset="1" stopColor="#6a3fd8" /></radialGradient>
            </defs>
            <g stroke="none">
              <path d="M2.500 9 4.500 4l2 3.500 3-.2L13 6l2 3 3-1-.5-4 2.500-3 1.500 4c3 1 4 2 5 4l.5-2C29.500 10 30 13 30 16c0 8-6.500 14-14.500 14S1 24 1 16c0-2.500.5-5 1.500-7z" fill="url(#ffx)" />
              <circle cx="15.5" cy="15.5" r="6" fill="url(#ffg)" />
              <path d="M5 9.500c2-2 5-2 7-.5l4 1.500c.5 1.500-1.500 2.500-3.500 2.800C10 15 10.500 18 13 19c-4 0-8-3-8-9.500z" fill="#ff9422" />
            </g>
          </Icon>
        </Cell>
        <Cell><FaDropbox className="h-[28px] w-[32px] text-white" preserveAspectRatio="none" /></Cell>
        <Cell>
          <Icon size="size-[30px]" box="0 0 30 30">
            <defs><pattern id="mesh" width="3" height="3" patternUnits="userSpaceOnUse"><rect width="3" height="3" fill="#1b78b4" /><rect x="1" y="1" width="1.4" height="1.4" fill="#fff" /></pattern></defs>
            <rect width="30" height="30" fill="#fff" stroke="none" />
            <text x="15" y="11" textAnchor="middle" fontSize="6.8" fontWeight="800" fill="#222" stroke="none" fontFamily="Noto Sans, sans-serif">amazon</text>
            <path d="M7 12.500c4 2.200 9 2 13 0" stroke="#f79a1c" strokeWidth="1.3" />
            <path d="M2 18.500h5l3.500 11" stroke="#1b78b4" strokeWidth="1.8" />
            <path d="M8 20.500h22v9H10.500z" fill="url(#mesh)" stroke="none" />
          </Icon>
        </Cell>
        <Cell>
          <Icon size="size-7" box="0 0 28 28"><circle cx="14" cy="14" r="14" fill="#4285f4" stroke="none" /><path d="M22.500 10.500A9 9 0 0 0 5.500 13c0 1 .5 1.500 1.500 1.500h5M5.500 17.500A9 9 0 0 0 22.500 15c0-1-.5-1.500-1.500-1.500h-5M10.500 12.300l2.200 2.200-2.200 2.200M17.500 11.300l-2.200 2.200 2.200 2.200" stroke="#fff" strokeWidth="1.7" /></Icon>
        </Cell>
        <div className="relative flex w-[55px] shrink-0 items-center justify-center">
          <Icon size="size-[30px]" box="0 0 30 30"><g stroke="none"><path d="M22 .5 30 4v22l-8 3.500z" fill="#2fa8f2" /><path d="M22 .5 1 19.500c-.6.6-.6 1.200 0 1.800L2.800 23c.5.4 1 .4 1.600 0L22 9.200z" fill="#1478bd" /><path d="M22 29.500 1 10.500c-.6-.6-.6-1.200 0-1.800L2.800 7c.5-.4 1-.4 1.600 0L22 20.800z" fill="#1b8bd6" /></g></Icon>
          <div className="absolute bottom-[5px] h-1 w-2 rounded-full bg-[#9a9a9a]" />
        </div>
      </div>
      <Icon className="ml-[133px]"><path d="m6 14.500 6-5.500 6 5.500" strokeWidth="1.9" /></Icon>
      <div className="ml-4 w-10 pb-0.5 text-center text-[14px] leading-5"><T>ENG</T><br /><T>IN</T></div>
      <Icon className="ml-[15px]"><path d="M2.500 10c5-5.300 14-5.300 19 0M5.500 13.200c3.700-3.700 9.300-3.700 13 0M8.500 16.300c2-2 5-2 7 0" strokeWidth="1.6" /><circle cx="12" cy="18.8" r="1.3" fill="currentColor" /></Icon>
      <Icon className="ml-1.5"><path d="M2.500 9.500h3.200L10.500 5v14l-4.800-4.500H2.500zM14 9.500c1 1.500 1 3.500 0 5M17 7c2.200 3 2.200 7 0 10M20 4.800c3.400 4.200 3.400 10.200 0 14.400" strokeWidth="1.5" /></Icon>
      <Icon className="ml-1.5"><rect x="2.5" y="6" width="17" height="12" rx="3" strokeWidth="1.6" /><rect x="5" y="8.3" width="10.5" height="7.4" rx="1" fill="currentColor" stroke="none" /><path d="M21 10.500v3" strokeWidth="2.2" /></Icon>
      <div className="ml-auto pb-0.5 text-right text-[14px] leading-5"><T>18:40</T><br /><T className="tracking-[0.42px]">15-02-2024</T></div>
      <Icon className="ml-[7px] mr-[23px] text-[#8fe6ff]"><path d="M12 2.500c-4 0-6.200 2.800-6.200 6.500v4L4 17v1h16v-1l-1.800-4V9c0-3.700-2.200-6.500-6.200-6.500zM9.500 20.500h5L13 21.700h-2z" fill="currentColor" strokeWidth="0.8" /></Icon>
    </div>
  );
}

export default function App() {
  return (
    <div className="flex h-[1080px] w-[1920px] flex-col overflow-hidden bg-[#3b3b3b] [font-family:'Noto_Sans','Noto_Sans_CJK_JP',sans-serif]">
      <TitleBar />
      <AddressRow />
      <div className="flex h-[934px] shrink-0">
        <LeftRail />
        <div className="w-[1802px] shrink-0">
          <Favorites />
          <Viewer />
        </div>
        <RightRail />
      </div>
      <Taskbar />
    </div>
  );
}
